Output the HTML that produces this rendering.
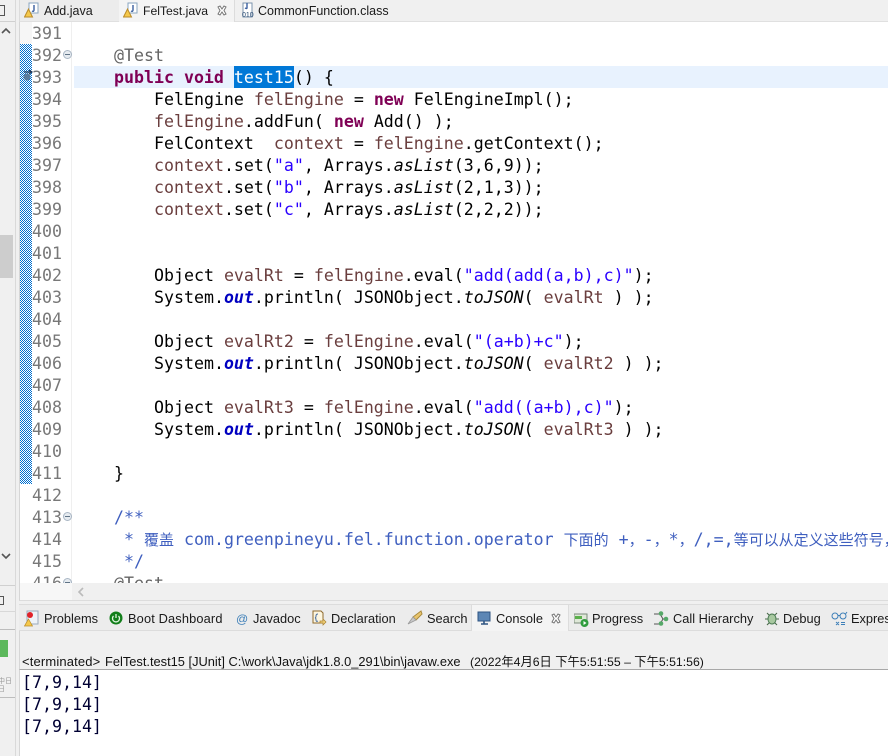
<!DOCTYPE html>
<html><head><meta charset="utf-8">
<style>
html,body{margin:0;padding:0;background:#f0f0f0;}
#p{position:relative;width:888px;height:756px;overflow:hidden;background:#f0f0f0;font-family:"Liberation Sans","Noto Sans CJK SC",sans-serif;}
.a{position:absolute;}
.code{position:absolute;left:74px;height:22px;line-height:22px;margin-top:1px;font-family:"DejaVu Sans Mono","Noto Sans CJK SC",monospace;font-size:16.6px;white-space:pre;color:#000;}
.n{position:absolute;left:32px;width:30px;height:22px;line-height:22px;margin-top:1px;font-family:"DejaVu Sans Mono",monospace;font-size:16.6px;color:#787878;}
.k{color:#7f0055;font-weight:bold}
.v{color:#6a3e3e}
.s{color:#2a00ff}
.f{color:#0000c0;font-weight:bold;font-style:italic}
.i{font-style:italic}
.c{color:#3f5fbf}
.z{font-size:15px;font-family:"Noto Sans CJK SC",sans-serif}
.an{color:#646464}
.t{position:absolute;font-size:12.8px;line-height:16px;color:#1a1a1a;white-space:nowrap}
.u{font-size:12.5px}
.fold{position:absolute;left:63px;width:7px;height:7px;border:1px solid #a9b6c4;border-radius:50%;background:#e6ebf0;}
.fold:after{content:"";position:absolute;left:1px;top:3px;width:5px;height:1px;background:#5f7386;}
svg{position:absolute;}
</style></head><body><div id="p">
<!-- left strip -->
<div class="a" style="left:0;top:0;width:15px;height:756px;background:#f0f0f0;border-right:1px solid #d9d9d9"></div>
<div class="a" style="left:0;top:235px;width:13px;height:43px;background:#cdcdcd"></div>
<div class="a" style="left:0;top:21px;width:15px;height:1px;background:#d0d0d0"></div>
<div class="a" style="left:0;top:585px;width:15px;height:1px;background:#d0d0d0"></div>
<div class="a" style="left:0;top:611px;width:15px;height:1px;background:#d8d8d8"></div>
<div class="a" style="left:0;top:629px;width:15px;height:1px;background:#bdbdbd"></div>
<div class="a" style="left:0;top:640px;width:8px;height:17px;background:#5cb85c"></div>
<div class="a" style="left:0;top:697px;width:15px;height:1px;background:#bdbdbd"></div>
<div class="a" style="left:0;top:5px;width:4px;height:9px;border:1px solid #555;border-left:none"></div>
<div class="a" style="left:0;top:596px;width:3px;height:7px;border:1px solid #555;border-left:none"></div>
<div class="a" style="left:-2px;top:677px;font-size:7px;line-height:8px;color:#999;width:13px;overflow:hidden;white-space:nowrap;font-family:'Noto Sans CJK SC',sans-serif">中日<br>日</div>
<svg style="left:0;top:26px" width="12" height="10"><path d="M2 7L6 3L10 7" fill="none" stroke="#555" stroke-width="1.6"/></svg>
<svg style="left:0;top:551px" width="12" height="10"><path d="M2 3L6 7L10 3" fill="none" stroke="#555" stroke-width="1.6"/></svg>
<!-- tab bar -->
<div class="a" style="left:19px;top:0;width:869px;height:22px;background:#f0f0f0;border-bottom:1px solid #e0e0e0;box-sizing:border-box"></div>
<div class="a" style="left:19px;top:0;width:100px;height:21px;background:#ececec;border-right:1px solid #dcdcdc"></div>
<div class="a" style="left:119px;top:0;width:115px;height:22px;background:#f4f4f4;border-right:1px solid #dcdcdc"></div>
<div class="a" style="left:19px;top:0;width:1px;height:22px;background:#dcdcdc"></div>
<svg style="left:24px;top:2px" width="16" height="16"><path d="M5 1H14V11H5Z" fill="#fff" stroke="#8aa6c0"/><path d="M10 3V8Q10 10 8 9" fill="none" stroke="#3a5fa0" stroke-width="1.4"/><path d="M4.500 7L8.500 15H.5Z" fill="#f5c84b" stroke="#b98a28"/></svg>
<div class="t u" style="left:44px;top:3px">Add.java</div>
<svg style="left:123px;top:2px" width="16" height="16"><path d="M5 1H14V11H5Z" fill="#fff" stroke="#8aa6c0"/><path d="M10 3V8Q10 10 8 9" fill="none" stroke="#3a5fa0" stroke-width="1.4"/><path d="M4.500 7L8.500 15H.5Z" fill="#f5c84b" stroke="#b98a28"/></svg>
<div class="t u" style="left:143px;top:3px;font-size:12.2px">FelTest.java</div>
<svg style="left:216px;top:5px" width="12" height="12"><path d="M2 2L4 1L6 4L8 1L10 2L8 5.500L10 9L8 10L6 7L4 10L2 9L4 5.500Z" fill="#fff" stroke="#777"/></svg>
<svg style="left:240px;top:2px" width="16" height="16"><path d="M3 1H12V15H3Z" fill="#fff" stroke="#7b93ad"/><path d="M7 1V6Q7 7 5 6" fill="none" stroke="#3a5fa0" stroke-width="1.4"/><text x="2" y="15" font-size="7" font-family="Liberation Sans" fill="#24476f">010</text></svg>
<div class="t u" style="left:258px;top:3px">CommonFunction.class</div>
<!-- editor -->
<div class="a" style="left:19px;top:22px;width:869px;height:561px;background:#fff;border-left:1px solid #d6d6d6;box-sizing:border-box"></div>
<div class="a" style="left:20px;top:22px;width:12px;height:22px;background:#f6f6f6"></div>
<svg style="left:20px;top:44px" width="12" height="440" shape-rendering="crispEdges"><defs><pattern id="ck" width="2" height="2" patternUnits="userSpaceOnUse"><rect width="2" height="2" fill="#fff"/><rect width="1" height="1" fill="#0070d0"/><rect x="1" y="1" width="1" height="1" fill="#0070d0"/></pattern></defs><rect width="12" height="440" fill="url(#ck)"/></svg>
<div class="a" style="left:71px;top:22px;width:1px;height:561px;background:#efefef"></div>
<div class="a" style="left:74px;top:66px;width:814px;height:22px;background:#e8f2fe"></div>
<div class="a" style="left:234px;top:66px;width:60px;height:22px;background:#0078d7"></div>
<svg style="left:22px;top:69px" width="12" height="14"><circle cx="5" cy="8" r="3.500" fill="#5b7c9d"/><path d="M2 3H9M7 1L10 3L7 5" fill="none" stroke="#223a5a" stroke-width="1.2"/></svg>
<div class="n" style="top:22px">391</div>
<div class="n" style="top:44px">392</div><div class="fold" style="top:50px"></div>
<div class="n" style="top:66px">393</div>
<div class="n" style="top:88px">394</div>
<div class="n" style="top:110px">395</div>
<div class="n" style="top:132px">396</div>
<div class="n" style="top:154px">397</div>
<div class="n" style="top:176px">398</div>
<div class="n" style="top:198px">399</div>
<div class="n" style="top:220px">400</div>
<div class="n" style="top:242px">401</div>
<div class="n" style="top:264px">402</div>
<div class="n" style="top:286px">403</div>
<div class="n" style="top:308px">404</div>
<div class="n" style="top:330px">405</div>
<div class="n" style="top:352px">406</div>
<div class="n" style="top:374px">407</div>
<div class="n" style="top:396px">408</div>
<div class="n" style="top:418px">409</div>
<div class="n" style="top:440px">410</div>
<div class="n" style="top:462px">411</div>
<div class="n" style="top:484px">412</div>
<div class="n" style="top:506px">413</div><div class="fold" style="top:512px"></div>
<div class="n" style="top:528px">414</div>
<div class="n" style="top:550px">415</div>
<div class="n" style="top:572px">416</div><div class="fold" style="top:578px"></div>

<div class="code" style="top:44px;left:114px"><span class="an">@Test</span></div>
<div class="code" style="top:66px;left:114px"><span class="k">public</span> <span class="k">void</span> <span style="color:#fff">test15</span>() {</div>
<div class="code" style="top:88px;left:154px">FelEngine <span class="v">felEngine</span> = <span class="k">new</span> FelEngineImpl();</div>
<div class="code" style="top:110px;left:154px"><span class="v">felEngine</span>.addFun( <span class="k">new</span> Add() );</div>
<div class="code" style="top:132px;left:154px">FelContext  <span class="v">context</span> = <span class="v">felEngine</span>.getContext();</div>
<div class="code" style="top:154px;left:154px"><span class="v">context</span>.set(<span class="s">"a"</span>, Arrays.<span class="i">asList</span>(3,6,9));</div>
<div class="code" style="top:176px;left:154px"><span class="v">context</span>.set(<span class="s">"b"</span>, Arrays.<span class="i">asList</span>(2,1,3));</div>
<div class="code" style="top:198px;left:154px"><span class="v">context</span>.set(<span class="s">"c"</span>, Arrays.<span class="i">asList</span>(2,2,2));</div>
<div class="code" style="top:264px;left:154px">Object <span class="v">evalRt</span> = <span class="v">felEngine</span>.eval(<span class="s">"add(add(a,b),c)"</span>);</div>
<div class="code" style="top:286px;left:154px">System.<span class="f">out</span>.println( JSONObject.<span class="i">toJSON</span>( <span class="v">evalRt</span> ) );</div>
<div class="code" style="top:330px;left:154px">Object <span class="v">evalRt2</span> = <span class="v">felEngine</span>.eval(<span class="s">"(a+b)+c"</span>);</div>
<div class="code" style="top:352px;left:154px">System.<span class="f">out</span>.println( JSONObject.<span class="i">toJSON</span>( <span class="v">evalRt2</span> ) );</div>
<div class="code" style="top:396px;left:154px">Object <span class="v">evalRt3</span> = <span class="v">felEngine</span>.eval(<span class="s">"add((a+b),c)"</span>);</div>
<div class="code" style="top:418px;left:154px">System.<span class="f">out</span>.println( JSONObject.<span class="i">toJSON</span>( <span class="v">evalRt3</span> ) );</div>
<div class="code" style="top:462px;left:114px">}</div>
<div class="code c" style="top:506px;left:114px">/**</div>
<div class="code c" style="top:528px;left:114px"> * <span class="z">覆盖</span> com.greenpineyu.fel.function.operator <span class="z">下面的</span> +<span class="z">，</span>-<span class="z">，</span>*<span class="z">，</span>/,=,<span class="z">等可以从定义这些符号，</span></div>
<div class="code c" style="top:550px;left:114px"> */</div>
<div class="code an" style="top:572px;left:114px">@Test</div>
<!-- h scroll -->
<div class="a" style="left:20px;top:583px;width:868px;height:17px;background:#f0f0f0"></div>
<div class="a" style="left:20px;top:583px;width:52px;height:17px;background:#f7f7f7"></div>
<svg style="left:76px;top:586px" width="10" height="12"><path d="M7 2L3 6L7 10" fill="none" stroke="#bbb" stroke-width="1.6"/></svg>
<div class="a" style="left:19px;top:583px;width:869px;height:18px;border-bottom:1px solid #dcdcdc;border-left:1px solid #d6d6d6;box-sizing:border-box"></div>
<!-- bottom tabs -->
<div class="a" style="left:19px;top:604px;width:869px;height:27px;background:#ececec;border-top:1px solid #dcdcdc;border-bottom:1px solid #dcdcdc;box-sizing:border-box"></div>
<div class="a" style="left:471px;top:604px;width:98px;height:27px;background:#f4f4f4;border:1px solid #dcdcdc;border-bottom:none;box-sizing:border-box"></div>
<svg style="left:24px;top:610px" width="15" height="17"><path d="M3 1H14V14H3Z" fill="#eef3f8" stroke="#9aaabd"/><circle cx="6" cy="5" r="3" fill="#e0222a"/><path d="M4.500 9L8.500 16H.5Z" fill="#f5c84b" stroke="#b98a28" stroke-width=".7"/></svg>
<div class="t" style="left:44px;top:611px">Problems</div>
<svg style="left:109px;top:611px" width="14" height="14"><circle cx="7" cy="7" r="6.500" fill="#127e1a"/><path d="M4.500 5A3.500 3.500 0 1 0 9.500 5M7 3V7" fill="none" stroke="#dff5df" stroke-width="1.300"/></svg>
<div class="t" style="left:128px;top:611px;letter-spacing:.15px">Boot Dashboard</div>
<div class="t" style="left:236px;top:611px;color:#3d7fb8;font-size:12px">@</div>
<div class="t" style="left:253px;top:611px">Javadoc</div>
<svg style="left:311px;top:610px" width="16" height="17"><path d="M2 1H10L12 3V13H2Z" fill="#fdf6e0" stroke="#8e6a2c"/><path d="M7 4Q5 4 5 6T4 7.500Q5 8 5 10T7 11" fill="none" stroke="#4a6fa0"/><path d="M9 11H12V9L15 12L12 15V13H9Z" fill="#f1d27a" stroke="#a87f2e" stroke-width=".7"/></svg>
<div class="t" style="left:331px;top:611px">Declaration</div>
<svg style="left:407px;top:610px" width="16" height="16"><path d="M14 1L6 7L9 10L15 4Z" fill="#e9c56e" stroke="#a98a3c"/><path d="M6 7L1 14L9 10Z" fill="#c8c8c8" stroke="#9a9a9a" stroke-width=".8"/></svg>
<div class="t" style="left:427px;top:611px">Search</div>
<svg style="left:477px;top:611px" width="15" height="15"><rect x="1" y="1" width="12" height="9" fill="#5c86b5" stroke="#2e5482"/><path d="M4 13H11M7 10V13" stroke="#2e5482" stroke-width="1.6"/></svg>
<div class="t" style="left:496px;top:611px">Console</div>
<svg style="left:550px;top:613px" width="12" height="12"><path d="M2 2L4 1L6 4L8 1L10 2L8 5.500L10 9L8 10L6 7L4 10L2 9L4 5.500Z" fill="#fff" stroke="#777"/></svg>
<svg style="left:574px;top:613px" width="15" height="15"><rect x="0" y="1" width="13" height="9" fill="#dfe8d8" stroke="#7a8a7a"/><rect x="1" y="3" width="7" height="3" fill="#5bb04c"/><circle cx="10.500" cy="10" r="4" fill="#2f9c3e"/><path d="M9.500 8L12.500 10L9.500 12Z" fill="#fff"/></svg>
<div class="t" style="left:592px;top:611px">Progress</div>
<svg style="left:653px;top:610px" width="16" height="17"><path d="M1 4H7M1 14H7M7 4L10 9L7 14M10 9H13" fill="none" stroke="#555"/><circle cx="8" cy="3.500" r="2.300" fill="#55a868"/><circle cx="13" cy="9" r="2.300" fill="#55a868"/><circle cx="8" cy="13.500" r="2.300" fill="#55a868"/></svg>
<div class="t" style="left:673px;top:611px">Call Hierarchy</div>
<svg style="left:764px;top:611px" width="16" height="16"><path d="M3 2L6 5M13 2L10 5M1 8H4M12 8H15M3 14L6 11M13 14L10 11" stroke="#4a6b4a" stroke-width="1.100"/><ellipse cx="8" cy="8" rx="4" ry="5" fill="#a8c8a0" stroke="#4a7a52"/></svg>
<div class="t" style="left:783px;top:611px">Debug</div>
<svg style="left:831px;top:611px" width="17" height="15"><circle cx="4" cy="5" r="3" fill="none" stroke="#3d7fb8"/><circle cx="12" cy="5" r="3" fill="none" stroke="#3d7fb8"/><path d="M7 4.500H9M14.500 3L16 1" stroke="#3d7fb8"/><path d="M5 11L8 14M8 11L5 14M10 11.500H14M10 13.500H14" stroke="#3d7fb8" stroke-width=".9"/></svg>
<div class="t" style="left:851px;top:611px">Expres</div>
<!-- console -->
<div class="a" style="left:19px;top:631px;width:869px;height:38px;background:#f0f0f0;border-left:1px solid #d6d6d6;box-sizing:border-box"></div>
<div class="a" style="left:22px;top:654px;font-size:13px;line-height:16px;color:#111;white-space:pre;letter-spacing:.15px">&lt;terminated&gt;</div>
<div class="a" style="left:105px;top:654px;font-size:12.85px;line-height:16px;color:#111;white-space:pre">FelTest.test15 [JUnit] C:\work\Java\jdk1.8.0_291\bin\javaw.exe</div>
<div class="a" style="left:470px;top:654px;font-size:12.27px;line-height:16px;color:#111;white-space:pre">(2022年4月6日 下午5:51:55 – 下午5:51:56)</div>
<div class="a" style="left:19px;top:669px;width:869px;height:87px;background:#fff;border-top:1px solid #a8a8a8;border-left:1px solid #d6d6d6;box-sizing:border-box"></div>
<div class="code" style="top:672px;left:22px;margin-top:0;color:#000033">[7,9,14]</div>
<div class="code" style="top:694px;left:22px;margin-top:0;color:#000033">[7,9,14]</div>
<div class="code" style="top:716px;left:22px;margin-top:0;color:#000033">[7,9,14]</div>
</div></body></html>
